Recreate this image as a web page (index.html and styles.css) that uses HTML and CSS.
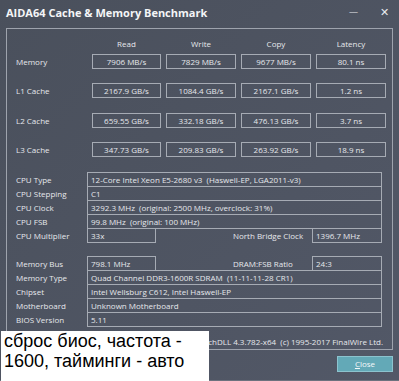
FILE: index.html
```html
<!DOCTYPE html>
<html lang="en">
<head>
	<meta charset="UTF-8">
	<title>AIDA64 Cache &amp; Memory Benchmark</title>
	<link rel="stylesheet" href="styles.css">
</head>
<body>
	<div class="window">
		<div class="titlebar">
			<span class="title">AIDA64 Cache &amp; Memory Benchmark</span>
			<span class="ctl min">&#8212;</span>
			<span class="ctl close-x">&#10005;</span>
		</div>
		<div class="frame">
			<div class="bench">
				<span class="head"></span>
				<span class="head">Read</span>
				<span class="head">Write</span>
				<span class="head">Copy</span>
				<span class="head">Latency</span>

				<span class="lbl">Memory</span>
				<span class="box">7906 MB/s</span>
				<span class="box">7829 MB/s</span>
				<span class="box">9677 MB/s</span>
				<span class="box">80.1 ns</span>

				<span class="lbl">L1 Cache</span>
				<span class="box">2167.9 GB/s</span>
				<span class="box">1084.4 GB/s</span>
				<span class="box">2167.1 GB/s</span>
				<span class="box">1.2 ns</span>

				<span class="lbl">L2 Cache</span>
				<span class="box">659.55 GB/s</span>
				<span class="box">332.18 GB/s</span>
				<span class="box">476.13 GB/s</span>
				<span class="box">3.7 ns</span>

				<span class="lbl">L3 Cache</span>
				<span class="box">347.73 GB/s</span>
				<span class="box">209.83 GB/s</span>
				<span class="box">263.92 GB/s</span>
				<span class="box">18.9 ns</span>
			</div>

			<div class="info first">
				<div class="row">
					<span class="lbl">CPU Type</span>
					<span class="val wide">12-Core Intel Xeon E5-2680 v3&nbsp; (Haswell-EP, LGA2011-v3)</span>
				</div>
				<div class="row">
					<span class="lbl">CPU Stepping</span>
					<span class="val wide">C1</span>
				</div>
				<div class="row">
					<span class="lbl">CPU Clock</span>
					<span class="val wide">3292.3 MHz&nbsp; (original: 2500 MHz, overclock: 31%)</span>
				</div>
				<div class="row">
					<span class="lbl">CPU FSB</span>
					<span class="val wide">99.8 MHz&nbsp; (original: 100 MHz)</span>
				</div>
				<div class="row">
					<span class="lbl">CPU Multiplier</span>
					<span class="val short">33x</span>
					<span class="lbl2">North Bridge Clock</span>
					<span class="val right">1396.7 MHz</span>
				</div>
			</div>

			<div class="info">
				<div class="row">
					<span class="lbl">Memory Bus</span>
					<span class="val short">798.1 MHz</span>
					<span class="lbl2">DRAM:FSB Ratio</span>
					<span class="val right">24:3</span>
				</div>
				<div class="row">
					<span class="lbl">Memory Type</span>
					<span class="val wide">Quad Channel DDR3-1600R SDRAM&nbsp; (11-11-11-28 CR1)</span>
				</div>
				<div class="row">
					<span class="lbl">Chipset</span>
					<span class="val wide">Intel Wellsburg C612, Intel Haswell-EP</span>
				</div>
				<div class="row">
					<span class="lbl">Motherboard</span>
					<span class="val wide">Unknown Motherboard</span>
				</div>
				<div class="row">
					<span class="lbl">BIOS Version</span>
					<span class="val wide">5.11</span>
				</div>
			</div>

			<div class="footer">AIDA64 v5.92.4300 / BenchDLL 4.3.782-x64&nbsp; (c) 1995-2017 FinalWire Ltd.</div>
		</div>

		<div class="buttons">
			<span class="btn">Save</span>
			<span class="btn start">Start Benchmark</span>
			<span class="spacer"></span>
			<span class="btn"><u>C</u>lose</span>
		</div>
	</div>

	<div class="note">сброс биос, частота -<br>1600, тайминги - авто</div>
</body>
</html>
```

FILE: styles.css
```css
html, body{
	margin: 0;
	padding: 0;
}
body{
	width: 399px;
	height: 381px;
	overflow: hidden;
	background: #4b515d;
	font-family: "Open Sans", "Noto Sans", sans-serif;
	font-size: 8px;
	color: #e6e8ec;
}
.window{
	height: 381px;
	box-sizing: border-box;
	padding: 0 6px;
	background: linear-gradient(135deg, #4a505c, #525867);
	border-bottom: 1px solid #6c727e;
}
.titlebar{
	display: flex;
	align-items: center;
	height: 26px;
}
.title{
	font-weight: bold;
	font-size: 11px;
	color: #f4f5f7;
	flex: 1;
	margin-top: -1px;
}
.ctl{
	color: #e8eaee;
	font-size: 11px;
	margin-top: -3px;
}
.min{
	margin-right: 22px;
	font-size: 9px;
}
.close-x{
	margin-right: 4px;
}
.frame{
	margin-top: 2px;
	height: 322px;
	box-sizing: border-box;
	border: 1px solid #9ea3ad;
	padding: 0 9px;
}
.bench{
	display: grid;
	grid-template-columns: 71px 69px 70px 70px 70px;
	column-gap: 5px;
	row-gap: 14.5px;
	align-items: center;
	padding-top: 9px;
}
.bench .head{
	text-align: center;
	height: 11px;
	line-height: 11px;
	margin-bottom: -10px;
}
.bench .lbl{
	line-height: 15px;
}
.box{
	height: 15px;
	line-height: 13px;
	box-sizing: border-box;
	border: 1px solid #a6abb4;
	text-align: center;
}
.info{
	margin-top: 14px;
}
.info.first{
	margin-top: 15px;
}
.row{
	display: flex;
	height: 14px;
	line-height: 15px;
}
.row .lbl{
	width: 71px;
}
.val{
	height: 15px;
	line-height: 13px;
	box-sizing: border-box;
	border: 1px solid #a6abb4;
	padding-left: 3px;
	white-space: nowrap;
	overflow: hidden;
}
.wide{
	width: 295px;
}
.short{
	width: 69px;
}
.right{
	width: 70px;
}
.lbl2{
	width: 156px;
	box-sizing: border-box;
	padding-left: 77px;
}
.footer{
	margin-top: 10px;
	text-align: right;
	white-space: nowrap;
	line-height: 11px;
}
.buttons{
	display: flex;
	margin-top: 6px;
	gap: 8px;
}
.btn{
	display: block;
	height: 16px;
	line-height: 14px;
	box-sizing: border-box;
	width: 56px;
	text-align: center;
	background: #63a9b7;
	border: 1px solid #8cc3ce;
	color: #f4f8fa;
}
.start{
	width: 80px;
}
.spacer{
	flex: 1;
}
.note{
	position: absolute;
	left: 1px;
	top: 331px;
	width: 208px;
	height: 50px;
	background: #fff;
	color: #000;
	font-family: "Liberation Sans", Arial, sans-serif;
	font-size: 18px;
	line-height: 20px;
	padding: 0 0 0 3px;
	box-sizing: border-box;
	white-space: nowrap;
}
```
